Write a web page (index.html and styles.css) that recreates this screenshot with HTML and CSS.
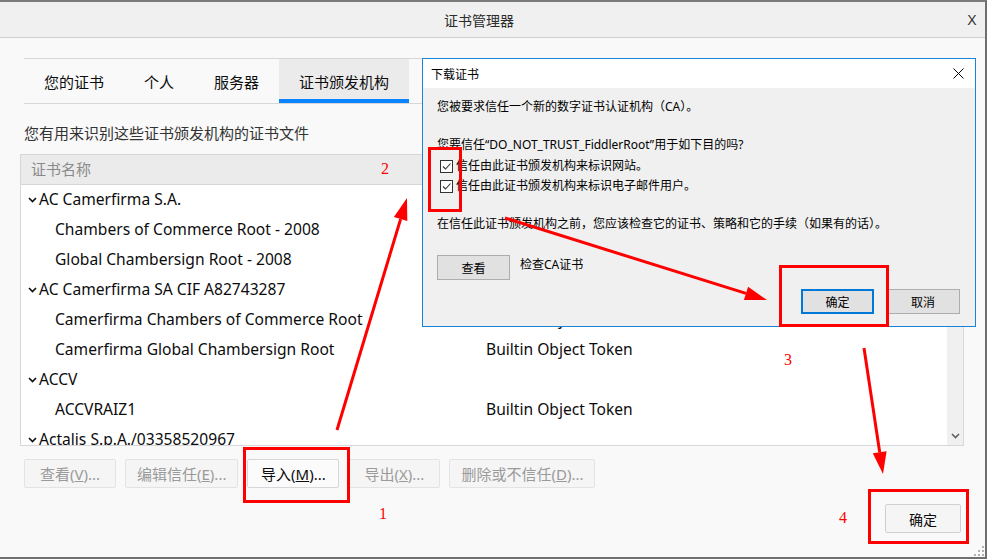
FILE: index.html
```html
<!DOCTYPE html>
<html lang="zh-CN">
<head>
<meta charset="utf-8">
<title>证书管理器</title>
<link rel="stylesheet" href="styles.css">
</head>
<body>
<div class="window">
  <div class="titlebar">
    <span class="title">证书管理器</span>
    <span class="close">X</span>
  </div>
  <div class="content">
    <div class="tabs">
      <div class="tab">您的证书</div>
      <div class="tab">个人</div>
      <div class="tab">服务器</div>
      <div class="tab active">证书颁发机构</div>
    </div>
    <p class="desc">您有用来识别这些证书颁发机构的证书文件</p>
    <div class="list">
      <div class="list-head">证书名称</div>
      <div class="list-body">
        <div class="rows">
          <div class="row group"><span class="name"><svg class="chev" width="9" height="6" viewBox="0 0 9 6"><path d="M1 1 L4.5 4.5 L8 1" fill="none" stroke="#0c0c0d" stroke-width="1.6"/></svg>AC Camerfirma S.A.</span><span></span></div>
          <div class="row child"><span class="name">Chambers of Commerce Root - 2008</span><span>Builtin Object Token</span></div>
          <div class="row child"><span class="name">Global Chambersign Root - 2008</span><span>Builtin Object Token</span></div>
          <div class="row group"><span class="name"><svg class="chev" width="9" height="6" viewBox="0 0 9 6"><path d="M1 1 L4.5 4.5 L8 1" fill="none" stroke="#0c0c0d" stroke-width="1.6"/></svg>AC Camerfirma SA CIF A82743287</span><span></span></div>
          <div class="row child"><span class="name">Camerfirma Chambers of Commerce Root</span><span>Builtin Object Token</span></div>
          <div class="row child"><span class="name">Camerfirma Global Chambersign Root</span><span>Builtin Object Token</span></div>
          <div class="row group"><span class="name"><svg class="chev" width="9" height="6" viewBox="0 0 9 6"><path d="M1 1 L4.5 4.5 L8 1" fill="none" stroke="#0c0c0d" stroke-width="1.6"/></svg>ACCV</span><span></span></div>
          <div class="row child"><span class="name">ACCVRAIZ1</span><span>Builtin Object Token</span></div>
          <div class="row group"><span class="name"><svg class="chev" width="9" height="6" viewBox="0 0 9 6"><path d="M1 1 L4.5 4.5 L8 1" fill="none" stroke="#0c0c0d" stroke-width="1.6"/></svg>Actalis S.p.A./03358520967</span><span></span></div>
        </div>
        <div class="scrollbar">
          <svg width="9" height="6" viewBox="0 0 9 6"><path d="M1 5 L4.5 1.5 L8 5" fill="none" stroke="#606060" stroke-width="1.6"/></svg>
          <svg width="9" height="6" viewBox="0 0 9 6"><path d="M1 1 L4.5 4.5 L8 1" fill="none" stroke="#606060" stroke-width="1.6"/></svg>
        </div>
      </div>
    </div>
    <div class="actions">
      <button class="btn disabled">查看(<u>V</u>)...</button>
      <button class="btn disabled">编辑信任(<u>E</u>)...</button>
      <button class="btn">导入(<u>M</u>)...</button>
      <button class="btn disabled">导出(<u>X</u>)...</button>
      <button class="btn disabled">删除或不信任(<u>D</u>)...</button>
    </div>
    <div class="footer">
      <button class="btn ok">确定</button>
    </div>
  </div>
</div>

<svg class="grip" width="10" height="10" viewBox="0 0 10 10">
  <rect x="8" y="0" width="2" height="2" fill="#b0b0b0"/>
  <rect x="4" y="4" width="2" height="2" fill="#b0b0b0"/>
  <rect x="8" y="4" width="2" height="2" fill="#b0b0b0"/>
  <rect x="0" y="8" width="2" height="2" fill="#b0b0b0"/>
  <rect x="4" y="8" width="2" height="2" fill="#b0b0b0"/>
  <rect x="8" y="8" width="2" height="2" fill="#b0b0b0"/>
</svg>

<div class="dialog">
  <div class="dlg-title">
    <span>下载证书</span>
    <svg class="dlg-close" width="11" height="11" viewBox="0 0 11 11"><path d="M0.5 0.5 L10.5 10.5 M10.5 0.5 L0.5 10.5" stroke="#000" stroke-width="1"/></svg>
  </div>
  <div class="dlg-body">
    <p class="dlg-p1">您被要求信任一个新的数字证书认证机构（CA）。</p>
    <p class="dlg-p2">您要信任“DO_NOT_TRUST_FiddlerRoot”用于如下目的吗?</p>
    <label class="cb-row first"><span class="cb"><svg width="11" height="11" viewBox="0 0 11 11"><path d="M2 5.5 L4.5 8 L9.5 2.5" fill="none" stroke="#333" stroke-width="1.1"/></svg></span>信任由此证书颁发机构来标识网站。</label>
    <label class="cb-row"><span class="cb"><svg width="11" height="11" viewBox="0 0 11 11"><path d="M2 5.5 L4.5 8 L9.5 2.5" fill="none" stroke="#333" stroke-width="1.1"/></svg></span>信任由此证书颁发机构来标识电子邮件用户。</label>
    <p class="dlg-p3">在信任此证书颁发机构之前，您应该检查它的证书、策略和它的手续（如果有的话）。</p>
    <div class="view-row">
      <button class="wbtn">查看</button>
      <span class="view-label">检查CA证书</span>
    </div>
    <div class="dlg-actions">
      <button class="wbtn default">确定</button>
      <button class="wbtn">取消</button>
    </div>
  </div>
</div>

<svg class="annot" width="987" height="559" viewBox="0 0 987 559">
  <g fill="none" stroke="#ff0000" stroke-width="3">
    <rect x="429.5" y="148.5" width="31" height="62"/>
    <rect x="780.5" y="266.5" width="107" height="59"/>
    <rect x="244.5" y="448.5" width="104" height="53"/>
    <rect x="869.5" y="490.5" width="98" height="52"/>
    <line x1="337" y1="430" x2="400.6" y2="219.1"/>
    <line x1="505" y1="218" x2="746" y2="293.4"/>
    <line x1="864" y1="348" x2="879.7" y2="452.2"/>
  </g>
  <g fill="#ff0000">
    <polygon points="407,198 407.3,221.1 393.9,217.1"/>
    <polygon points="767,300 743.9,300.1 748.1,286.7"/>
    <polygon points="883,474 872.8,453.3 886.6,451.2"/>
  </g>
  <g class="num" fill="#ff0000">
    <text x="385" y="174">2</text>
    <text x="383" y="519">1</text>
    <text x="788" y="365">3</text>
    <text x="843" y="523">4</text>
  </g>
</svg>
</body>
</html>
```

FILE: styles.css
```css
* { box-sizing: border-box; }

body {
  margin: 0;
  width: 987px;
  height: 559px;
  overflow: hidden;
  position: relative;
  background: #f9f9f9;
  font-family: "Noto Sans", "Noto Sans CJK SC", sans-serif;
  color: #0c0c0d;
}

.window {
  width: 987px;
  height: 559px;
  border-top: 2px solid #7a7a7a;
  border-right: 2px solid #6f6f6f;
  border-bottom: 2px solid #6f6f6f;
  background: #f9f9f9;
  display: flex;
  flex-direction: column;
}

.titlebar {
  height: 36px;
  flex: none;
  background: #f0f0f0;
  border-bottom: 1px solid #cfcfcf;
  display: flex;
  align-items: center;
  padding-right: 8px;
}

.title {
  flex: 1;
  text-align: center;
  padding-right: 9px;
  font-family: "Noto Sans CJK SC", sans-serif;
  font-size: 14px;
  color: #2b2b2b;
}

.close {
  width: 10px;
  font-family: "Liberation Sans", sans-serif;
  font-size: 14px;
  color: #333;
  text-align: center;
}

.content {
  flex: 1;
  padding: 20px 21px 0 24px;
  display: flex;
  flex-direction: column;
}

.tabs {
  display: flex;
  height: 46px;
  border-top: 1px solid #d7d7db;
  border-bottom: 1px solid #d7d7db;
}

.tab {
  padding: 0 20px;
  display: flex;
  align-items: center;
  font-family: "Noto Sans CJK SC", sans-serif;
  font-size: 15px;
  color: #0c0c0d;
}

.tab.active {
  background: #ebebeb;
  box-shadow: inset 0 -4px 0 #0a84ff;
}

.desc {
  margin: 19px 0 0;
  font-family: "Noto Sans CJK SC", sans-serif;
  font-size: 15px;
  line-height: 20px;
  color: #333;
}

.list {
  margin: 11px 0 0 -4px;
  border: 1px solid #d7d7db;
  background: #fff;
}

.list-head {
  height: 30px;
  background: #ebebeb;
  border-bottom: 1px solid #d7d7db;
  padding: 0 0 2px 10px;
  display: flex;
  align-items: center;
  font-family: "Noto Sans CJK SC", sans-serif;
  font-size: 15px;
  color: #8a8a8a;
}

.list-body {
  display: flex;
  height: 260px;
  overflow: hidden;
}

.rows { flex: 1; margin-top: -1px; }

.row {
  display: grid;
  grid-template-columns: 465px 1fr;
  height: 30px;
  align-items: center;
  font-size: 15.6px;
  color: #0c0c0d;
  white-space: nowrap;
}

.row.group .name {
  padding-left: 7px;
  display: flex;
  align-items: center;
}

.chev { margin-right: 2px; margin-top: 2px; }

.row.child .name { padding-left: 34px; }

.scrollbar {
  width: 16px;
  background: #f0f0f0;
  display: flex;
  flex-direction: column;
  justify-content: space-between;
  align-items: center;
  padding: 6px 0 6px;
}

.actions {
  display: flex;
  gap: 9px;
  margin-top: 13px;
}

.btn {
  height: 29px;
  min-width: 92px;
  padding: 0 11px;
  border: 1px solid #d7d7db;
  border-radius: 2px;
  background: #fbfbfb;
  font-family: "Noto Sans", "Noto Sans CJK SC", sans-serif;
  font-size: 15px;
  color: #0c0c0d;
}

.btn.disabled {
  background: #f5f5f5;
  border-color: #e3e3e3;
  color: #9a9a9a;
}

.footer {
  display: flex;
  justify-content: flex-end;
  margin-top: 16px;
  padding-right: 3px;
}

.btn.ok {
  width: 76px;
  min-width: 0;
  background: #f5f5f5;
  border-color: #d0d0d0;
  font-size: 14px;
}

.grip {
  position: absolute;
  right: 3px;
  bottom: 3px;
}

/* Dialog */
.dialog {
  position: absolute;
  left: 422px;
  top: 58px;
  width: 554px;
  height: 269px;
  border: 1px solid #1883d7;
  background: #f0f0f0;
  font-family: "Noto Sans", "Noto Sans CJK SC", sans-serif;
  font-size: 12px;
  color: #000;
  display: flex;
  flex-direction: column;
}

.dlg-title {
  height: 29px;
  flex: none;
  background: #fff;
  display: flex;
  align-items: center;
  justify-content: space-between;
  padding: 0 11px 0 8px;
  font-family: "Noto Sans CJK SC", sans-serif;
}

.dlg-body {
  padding: 0 15px 0 14px;
  display: flex;
  flex-direction: column;
}

.dlg-body p {
  margin: 0;
  line-height: 16px;
}

.dlg-p1 { margin-top: 11px !important; }
.dlg-p2 { margin-top: 22px !important; }
.dlg-p3 { margin-top: 22px !important; }

.cb-row {
  display: flex;
  align-items: center;
  height: 16px;
  margin-top: 4px;
  line-height: 16px;
}

.cb-row.first { margin-top: 5px; }

.cb {
  width: 13px;
  height: 13px;
  margin: 0 3px 0 3px;
  border: 1px solid #333;
  background: #fff;
  display: flex;
  align-items: center;
  justify-content: center;
}

.view-row {
  display: flex;
  align-items: flex-start;
  margin-top: 23px;
}

.view-label {
  margin-left: 10px;
  line-height: 24px;
  margin-top: -2px;
}

.wbtn {
  width: 73px;
  height: 25px;
  padding: 0;
  border: 1px solid #adadad;
  background: #e1e1e1;
  font-family: "Noto Sans CJK SC", sans-serif;
  font-size: 12px;
  color: #000;
}

.wbtn.default {
  border: 2px solid #0078d7;
}

.dlg-actions {
  display: flex;
  justify-content: flex-end;
  gap: 12px;
  margin-top: 9px;
}

.dlg-actions .wbtn:last-child { width: 74px; }

/* Annotations */
.annot {
  position: absolute;
  left: 0;
  top: 0;
  pointer-events: none;
}

.num text {
  font-family: "Liberation Serif", serif;
  font-size: 16px;
  text-anchor: middle;
}
```
